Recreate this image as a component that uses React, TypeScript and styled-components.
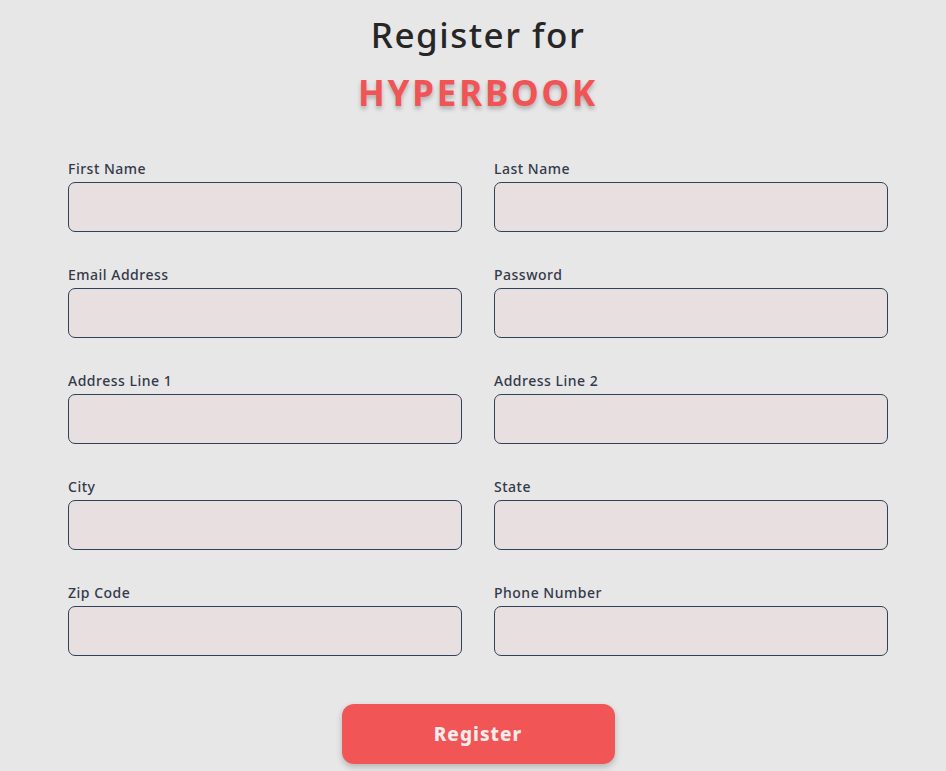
import React from "react";
import styled, { createGlobalStyle } from "styled-components";

const Global = createGlobalStyle`
  html, body { margin: 0; padding: 0; background: #e7e7e7; }
  body { font-family: "Noto Sans", "Open Sans", sans-serif; }
  * { box-sizing: border-box; }
`;

const Page = styled.div`
  width: 946px;
  min-height: 771px;
  padding: 12px 58px 0 68px;
  display: flex;
  flex-direction: column;
  align-items: center;
`;

const Title = styled.h1`
  margin: 0;
  font-size: 35px;
  font-weight: 500;
  color: #262626;
  line-height: 46px;
  letter-spacing: 1.5px;
  text-align: center;
`;

const Brand = styled.h2`
  margin: 12px 0 0;
  font-size: 35px;
  font-weight: 700;
  color: #f05455;
  line-height: 46px;
  letter-spacing: 2.8px;
  text-shadow: 0 3px 4px rgba(0, 0, 0, 0.25);
`;

const Form = styled.form`
  margin-top: 46px;
  width: 100%;
  display: grid;
  grid-template-columns: 1fr 1fr;
  column-gap: 32px;
  row-gap: 36px;
`;

const Field = styled.div`
  display: flex;
  flex-direction: column;
`;

const Label = styled.label`
  font-size: 14px;
  font-weight: 500;
  color: #33394a;
  line-height: 14px;
  letter-spacing: 0.5px;
  margin-bottom: 6px;
`;

const Input = styled.input`
  height: 50px;
  width: 100%;
  background: #e8dfe0;
  border: 1px solid #2f4257;
  border-radius: 7px;
  outline: none;
  font-size: 16px;
  padding: 0 12px;
`;

const Actions = styled.div`
  grid-column: 1 / -1;
  display: flex;
  justify-content: center;
  margin-top: 12px;
`;

const Button = styled.button`
  width: 273px;
  height: 60px;
  border: none;
  border-radius: 12px;
  background: #f15556;
  color: #f3ecec;
  font-family: inherit;
  font-size: 19px;
  font-weight: 800;
  letter-spacing: 1px;
  box-shadow: 0 3px 6px rgba(0, 0, 0, 0.22);
  cursor: pointer;
`;

const fields = [
  "First Name",
  "Last Name",
  "Email Address",
  "Password",
  "Address Line 1",
  "Address Line 2",
  "City",
  "State",
  "Zip Code",
  "Phone Number",
];

export default function App() {
  return (
    <>
      <Global />
      <Page>
        <Title>Register for</Title>
        <Brand>HYPERBOOK</Brand>
        <Form onSubmit={(e) => e.preventDefault()}>
          {fields.map((f) => (
            <Field key={f}>
              <Label>{f}</Label>
              <Input type={f === "Password" ? "password" : "text"} />
            </Field>
          ))}
          <Actions>
            <Button type="submit">Register</Button>
          </Actions>
        </Form>
      </Page>
    </>
  );
}
